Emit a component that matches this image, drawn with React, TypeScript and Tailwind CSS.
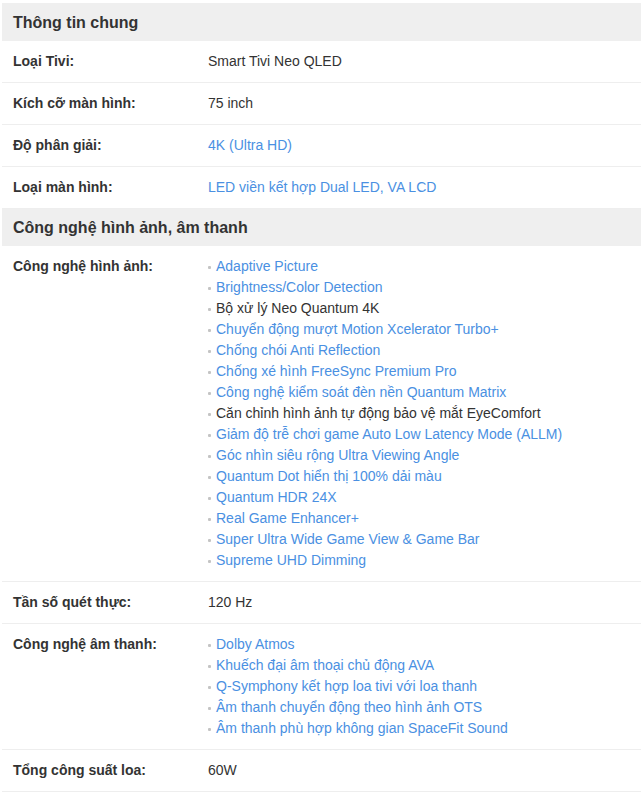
import React from "react";

type Item = { t: string; link?: boolean };
type Row = { label: string; value?: Item; list?: Item[] };
type Section = { title: string; rows: Row[]; h: string };

const data: Section[] = [
  {
    title: "Thông tin chung",
    h: "h-[38px]",
    rows: [
      { label: "Loại Tivi:", value: { t: "Smart Tivi Neo QLED" } },
      { label: "Kích cỡ màn hình:", value: { t: "75 inch" } },
      { label: "Độ phân giải:", value: { t: "4K (Ultra HD)", link: true } },
      { label: "Loại màn hình:", value: { t: "LED viền kết hợp Dual LED, VA LCD", link: true } },
    ],
  },
  {
    title: "Công nghệ hình ảnh, âm thanh",
    h: "h-[37px]",
    rows: [
      {
        label: "Công nghệ hình ảnh:",
        list: [
          { t: "Adaptive Picture", link: true },
          { t: "Brightness/Color Detection", link: true },
          { t: "Bộ xử lý Neo Quantum 4K" },
          { t: "Chuyển động mượt Motion Xcelerator Turbo+", link: true },
          { t: "Chống chói Anti Reflection", link: true },
          { t: "Chống xé hình FreeSync Premium Pro", link: true },
          { t: "Công nghệ kiểm soát đèn nền Quantum Matrix", link: true },
          { t: "Căn chỉnh hình ảnh tự động bảo vệ mắt EyeComfort" },
          { t: "Giảm độ trễ chơi game Auto Low Latency Mode (ALLM)", link: true },
          { t: "Góc nhìn siêu rộng Ultra Viewing Angle", link: true },
          { t: "Quantum Dot hiển thị 100% dải màu", link: true },
          { t: "Quantum HDR 24X", link: true },
          { t: "Real Game Enhancer+", link: true },
          { t: "Super Ultra Wide Game View & Game Bar", link: true },
          { t: "Supreme UHD Dimming", link: true },
        ],
      },
      { label: "Tần số quét thực:", value: { t: "120 Hz" } },
      {
        label: "Công nghệ âm thanh:",
        list: [
          { t: "Dolby Atmos", link: true },
          { t: "Khuếch đại âm thoại chủ động AVA", link: true },
          { t: "Q-Symphony kết hợp loa tivi với loa thanh", link: true },
          { t: "Âm thanh chuyển động theo hình ảnh OTS", link: true },
          { t: "Âm thanh phù hợp không gian SpaceFit Sound", link: true },
        ],
      },
      { label: "Tổng công suất loa:", value: { t: "60W" } },
    ],
  },
];

function Text({ item }: { item: Item }) {
  return (
    <span className={item.link ? "text-[#4a90e2]" : "text-[#333]"}>{item.t}</span>
  );
}

export default function App() {
  return (
    <div
      className="bg-white min-h-[793px] pt-[3px] px-[2px] text-[14px] leading-[21px] text-[#333]"
      style={{ fontFamily: '"Liberation Sans", Arial, sans-serif' }}
    >
      {data.map((s) => (
        <div key={s.title}>
          <div className={`bg-[#efefef] ${s.h} flex items-center px-[11px] text-[16px] font-bold text-[#333]`}>
            {s.title}
          </div>
          {s.rows.map((r) => (
            <div key={r.label} className="flex border-b border-[#eeeeee] py-[10px]">
              <div className="w-[206px] shrink-0 pl-[11px] font-bold text-[#333]">{r.label}</div>
              <div className="flex-1">
                {r.value && <Text item={r.value} />}
                {r.list &&
                  r.list.map((it) => (
                    <div key={it.t} className="flex items-center">
                      <span className="inline-block w-[3px] h-[3px] rounded-[1px] bg-[#c4c4c4] mr-[5px] mt-[1px]" />
                      <Text item={it} />
                    </div>
                  ))}
              </div>
            </div>
          ))}
        </div>
      ))}
    </div>
  );
}
